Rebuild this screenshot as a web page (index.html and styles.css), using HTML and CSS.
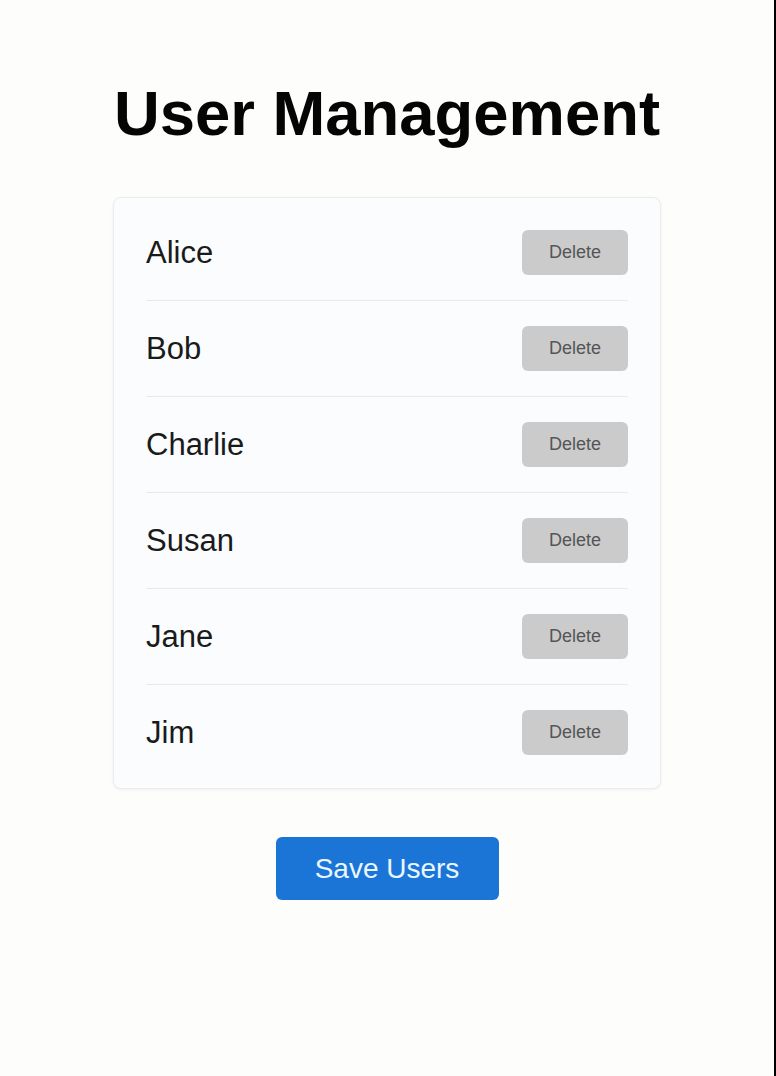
FILE: index.html
```html
<!DOCTYPE html>
<html lang="en">
<head>
<meta charset="utf-8">
<title>User Management</title>
<link rel="stylesheet" href="styles.css">
</head>
<body>
<div class="page">
  <h1 class="title">User Management</h1>
  <ul class="user-list">
    <li class="user-row"><span class="user-name">Alice</span><button class="btn-delete">Delete</button></li>
    <li class="user-row"><span class="user-name">Bob</span><button class="btn-delete">Delete</button></li>
    <li class="user-row"><span class="user-name">Charlie</span><button class="btn-delete">Delete</button></li>
    <li class="user-row"><span class="user-name">Susan</span><button class="btn-delete">Delete</button></li>
    <li class="user-row"><span class="user-name">Jane</span><button class="btn-delete">Delete</button></li>
    <li class="user-row"><span class="user-name">Jim</span><button class="btn-delete">Delete</button></li>
  </ul>
  <div class="actions">
    <button class="btn-save">Save Users</button>
  </div>
</div>
</body>
</html>
```
FILE: styles.css
```css
html, body {
  margin: 0;
  padding: 0;
  background: #fdfdfb;
}

body {
  font-family: "Liberation Sans", Arial, sans-serif;
}

.page {
  box-sizing: border-box;
  width: 100%;
  min-height: 100vh;
  border-right: 2px solid #000;
  padding-top: 77px;
  display: flex;
  flex-direction: column;
  align-items: center;
}

.title {
  margin: 0;
  font-size: 63.4px;
  line-height: 72px;
  font-weight: 700;
  color: #050505;
  text-align: center;
}

.user-list {
  list-style: none;
  box-sizing: border-box;
  width: 548px;
  margin: 48px 0 0;
  padding: 7px 32px 8px;
  background: #fafcfd;
  border: 1px solid #ececec;
  border-radius: 8px;
  box-shadow: 0 1px 3px rgba(0, 0, 0, 0.06);
}

.user-row {
  display: flex;
  align-items: center;
  justify-content: space-between;
  padding: 25px 0;
  border-bottom: 1px solid #e6eaec;
}

.user-row:last-child {
  border-bottom: none;
}

.user-name {
  font-size: 31px;
  color: #1a1a1a;
}

.btn-delete {
  width: 106px;
  height: 45px;
  border: none;
  border-radius: 6px;
  background: #cbcbcb;
  color: #555;
  font-family: "Liberation Sans", Arial, sans-serif;
  font-size: 18px;
  padding: 0;
}

.actions {
  margin-top: 48px;
}

.btn-save {
  width: 223px;
  height: 63px;
  border: none;
  border-radius: 6px;
  background: #1b75d6;
  color: #eaf6ff;
  font-family: "Liberation Sans", Arial, sans-serif;
  font-size: 28px;
  padding: 0;
}
```
